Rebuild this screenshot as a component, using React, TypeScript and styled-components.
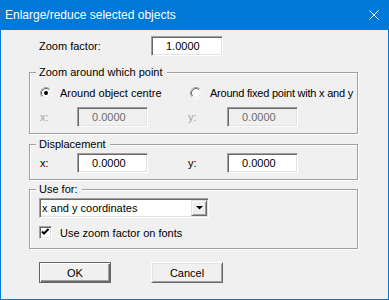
import React from "react";
import styled, { createGlobalStyle } from "styled-components";

const GlobalStyle = createGlobalStyle`
  html, body {
    margin: 0;
    padding: 0;
    background: #f0f0f0;
  }

  * {
    box-sizing: border-box;
  }
`;

const Window = styled.div`
  width: 389px;
  height: 300px;
  display: flex;
  flex-direction: column;
  border: 1px solid #0078d7;
  border-top: none;
  background: #f0f0f0;
  font-family: "Liberation Sans", Arial, sans-serif;
  font-size: 11px;
  color: #000;
`;

const TitleBar = styled.div`
  height: 30px;
  display: flex;
  align-items: center;
  justify-content: space-between;
  padding: 0 9px 0 4px;
  background: #0078d7;
  color: #fff;
  font-size: 12px;
`;

const Body = styled.div`
  flex: 1;
  display: flex;
  flex-direction: column;
  padding: 6px 0 0 28px;
`;

const Row = styled.div<{ $top?: number; $left?: number; $height?: number }>`
  display: flex;
  align-items: center;
  height: ${(p) => p.$height ?? 20}px;
  margin-top: ${(p) => p.$top ?? 0}px;
  padding-left: ${(p) => p.$left ?? 10}px;
`;

const Label = styled.span<{ $width: number; $disabled?: boolean }>`
  width: ${(p) => p.$width}px;
  flex-shrink: 0;
  white-space: nowrap;
  color: ${(p) => (p.$disabled ? "#a0a0a0" : "#000")};
`;

const EditBox = styled.div<{ $width: number; $disabled?: boolean }>`
  width: ${(p) => p.$width}px;
  height: 20px;
  flex-shrink: 0;
  padding-left: 14px;
  line-height: 18px;
  border: 1px solid;
  border-color: #a0a0a0 #fff #fff #a0a0a0;
  box-shadow: inset 1px 1px #696969, inset -1px -1px #e3e3e3;
  background: ${(p) => (p.$disabled ? "#f0f0f0" : "#fff")};
  color: ${(p) => (p.$disabled ? "#6d6d6d" : "#000")};
`;

const Cell = styled.div<{ $width: number }>`
  width: ${(p) => p.$width}px;
  display: flex;
  align-items: center;
`;

const Group = styled.div<{ $top: number; $bottom: number }>`
  width: 329px;
  margin-top: ${(p) => p.$top}px;
  padding-bottom: ${(p) => p.$bottom}px;
  display: flex;
  flex-direction: column;
  border: 1px solid #a0a0a0;
  box-shadow: inset 1px 1px #fff, 1px 1px #fff;
`;

const GroupTitle = styled.span`
  align-self: flex-start;
  height: 13px;
  margin: -7px 0 0 6px;
  padding: 0 4px 0 3px;
  line-height: 13px;
  background: #f0f0f0;
  white-space: nowrap;
`;

const RadioItem = styled.div<{ $width: number }>`
  width: ${(p) => p.$width}px;
  display: flex;
  align-items: center;
  gap: 8px;
  white-space: nowrap;
`;

const RadioText = styled.span<{ $tight?: boolean }>`
  letter-spacing: ${(p) => (p.$tight ? "-0.22px" : "normal")};
`;

const Combo = styled.div`
  width: 170px;
  height: 20px;
  display: flex;
  padding: 1px;
  border: 1px solid;
  border-color: #a0a0a0 #fff #fff #a0a0a0;
  box-shadow: inset 1px 1px #696969, inset -1px -1px #e3e3e3;
  background: #fff;
`;

const ComboText = styled.span`
  flex: 1;
  padding-left: 1px;
  line-height: 16px;
`;

const ComboButton = styled.div`
  width: 16px;
  height: 16px;
  display: flex;
  align-items: center;
  justify-content: center;
  border: 1px solid;
  border-color: #e3e3e3 #696969 #696969 #e3e3e3;
  box-shadow: inset 1px 1px #fff, inset -1px -1px #a0a0a0;
  background: #f0f0f0;
`;

const CheckBox = styled.div`
  width: 13px;
  height: 13px;
  flex-shrink: 0;
  margin-right: 8px;
  border: 1px solid;
  border-color: #a0a0a0 #fff #fff #a0a0a0;
  box-shadow: inset 1px 1px #696969, inset -1px -1px #e3e3e3;
  background: #fff;
  display: flex;
  align-items: center;
  justify-content: center;
`;

const ButtonRow = styled.div`
  display: flex;
  gap: 40px;
  margin: 13px 0 0 10px;
`;

const Button = styled.button<{ $default?: boolean }>`
  width: 72px;
  height: 21px;
  padding: 0;
  font: inherit;
  color: #000;
  background: #f0f0f0;
  border: 1px solid;
  border-color: ${(p) =>
    p.$default ? "#646464" : "#fff #696969 #696969 #fff"};
  box-shadow: ${(p) =>
    p.$default
      ? "inset 1px 1px #fff, inset -1px -1px #696969, inset -2px -2px #a0a0a0"
      : "inset 1px 1px #e3e3e3, inset -1px -1px #a0a0a0"};
`;

const CloseIcon = () => (
  <svg width="10" height="10" viewBox="0 0 10 10">
    <path d="M0.5 0.5 L9.5 9.5 M9.5 0.5 L0.5 9.5" stroke="#fff" strokeWidth="1" />
  </svg>
);

const RadioIcon = ({ checked }: { checked?: boolean }) => (
  <svg width="12" height="12" viewBox="0 0 12 12" style={{ flexShrink: 0 }}>
    <circle cx="6" cy="6" r="5" fill="#fff" />
    <path d="M9.89 2.11 A5.5 5.5 0 0 0 2.11 9.89" fill="none" stroke="#a0a0a0" />
    <path d="M9.18 2.82 A4.5 4.5 0 0 0 2.82 9.18" fill="none" stroke="#696969" />
    <path d="M9.89 2.11 A5.5 5.5 0 0 1 2.11 9.89" fill="none" stroke="#fff" />
    <path d="M9.18 2.82 A4.5 4.5 0 0 1 2.82 9.18" fill="none" stroke="#e3e3e3" />
    {checked && <circle cx="6" cy="6" r="2" fill="#000" />}
  </svg>
);

const CheckMark = () => (
  <svg width="9" height="9" viewBox="0 0 9 9">
    <path d="M1 3.5 L3 5.5 L7.5 1" fill="none" stroke="#000" strokeWidth="2" />
  </svg>
);

const DownArrow = () => (
  <svg width="7" height="4" viewBox="0 0 7 4">
    <polygon points="0,0 7,0 3.5,3.5" fill="#000" />
  </svg>
);

export default function App() {
  return (
    <>
      <GlobalStyle />
      <Window>
        <TitleBar>
          <span>Enlarge/reduce selected objects</span>
          <CloseIcon />
        </TitleBar>
        <Body>
          <Row>
            <Label $width={112}>Zoom factor:</Label>
            <EditBox $width={72}>1.0000</EditBox>
          </Row>

          <Group $top={16} $bottom={6}>
            <GroupTitle>Zoom around which point</GroupTitle>
            <Row $top={7} $height={13}>
              <RadioItem $width={150}>
                <RadioIcon checked />
                <RadioText>Around object centre</RadioText>
              </RadioItem>
              <RadioItem $width={165}>
                <RadioIcon />
                <RadioText $tight>Around fixed point with x and y</RadioText>
              </RadioItem>
            </Row>
            <Row $top={8}>
              <Cell $width={148}>
                <Label $width={37} $disabled>x:</Label>
                <EditBox $width={71} $disabled>0.0000</EditBox>
              </Cell>
              <Cell $width={110}>
                <Label $width={39} $disabled>y:</Label>
                <EditBox $width={71} $disabled>0.0000</EditBox>
              </Cell>
            </Row>
          </Group>

          <Group $top={10} $bottom={6}>
            <GroupTitle>Displacement</GroupTitle>
            <Row $top={2}>
              <Cell $width={148}>
                <Label $width={37}>x:</Label>
                <EditBox $width={71}>0.0000</EditBox>
              </Cell>
              <Cell $width={110}>
                <Label $width={39}>y:</Label>
                <EditBox $width={71}>0.0000</EditBox>
              </Cell>
            </Row>
          </Group>

          <Group $top={9} $bottom={9}>
            <GroupTitle>Use for:</GroupTitle>
            <Row $top={2} $left={9}>
              <Combo>
                <ComboText>x and y coordinates</ComboText>
                <ComboButton>
                  <DownArrow />
                </ComboButton>
              </Combo>
            </Row>
            <Row $top={8} $left={9} $height={13}>
              <CheckBox>
                <CheckMark />
              </CheckBox>
              <span>Use zoom factor on fonts</span>
            </Row>
          </Group>

          <ButtonRow>
            <Button $default>OK</Button>
            <Button>Cancel</Button>
          </ButtonRow>
        </Body>
      </Window>
    </>
  );
}
